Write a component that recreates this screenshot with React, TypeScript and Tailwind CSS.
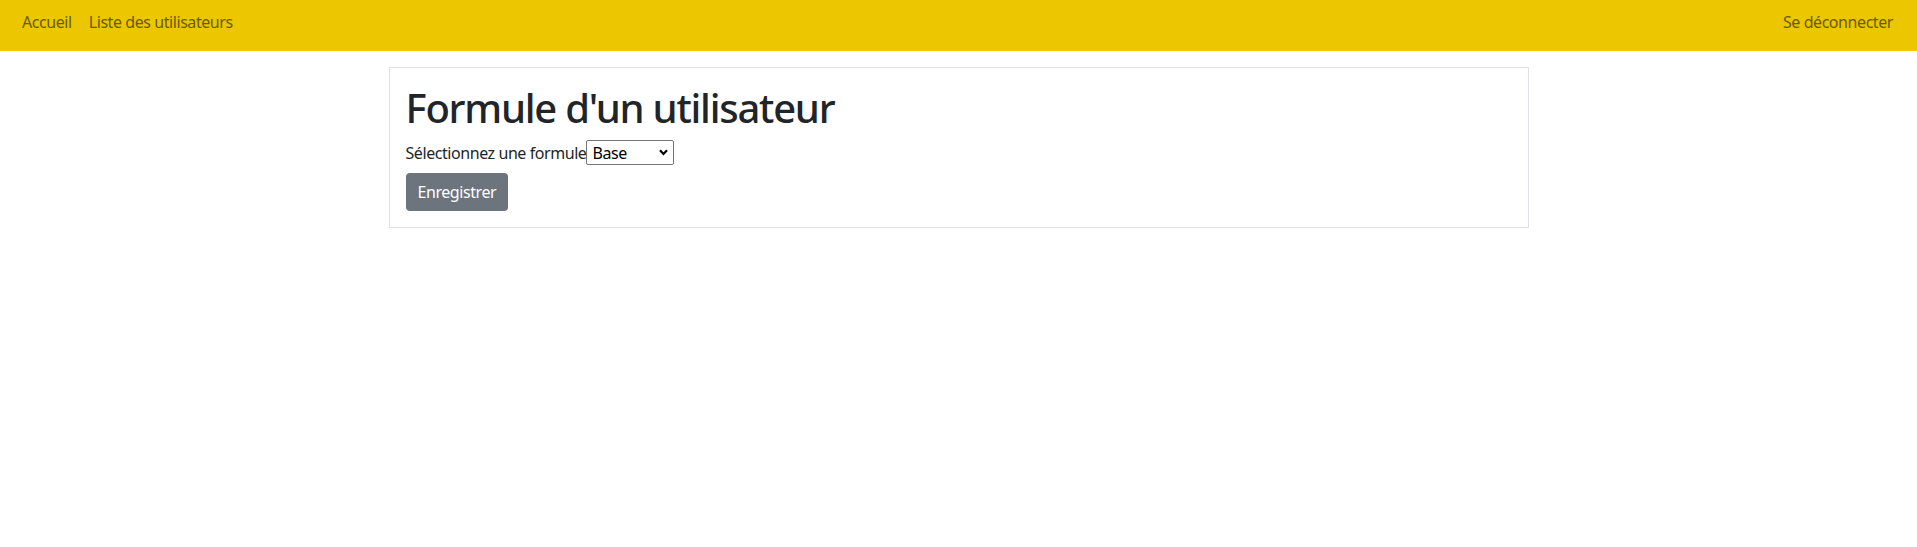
import React from "react";

export default function App() {
  return (
    <div className="min-h-screen bg-white tracking-[-0.027em] text-[#212529]" style={{ fontFamily: '"Noto Sans", "Open Sans", sans-serif' }}>
      <nav className="flex h-[51px] items-start justify-between bg-[#ecc700] pl-[22px] pr-[24px] pt-[10px] text-[16px] leading-[24px] text-[#6a5a00]">
        <div className="flex gap-[17px]">
          <a href="#">Accueil</a>
          <a href="#">Liste des utilisateurs</a>
        </div>
        <a href="#">Se déconnecter</a>
      </nav>
      <div className="mx-auto mt-4 w-[1140px] border border-[#dee2e6] p-4">
        <h1 className="mb-2 text-[40px] font-medium leading-[48px] tracking-[-0.031em]">Formule d'un utilisateur</h1>
        <form>
          <div className="flex items-center text-[16px] leading-[24px]">
            <label htmlFor="formule">Sélectionnez une formule</label>
            <div className="relative flex">
              <select
                id="formule"
                className="h-[25px] w-[88px] appearance-none rounded-[2px] border border-[#767676] bg-white pl-[5px] text-[16px] leading-[20px] text-black"
                defaultValue="Base"
              >
                <option>Base</option>
                <option>Premium</option>
              </select>
              <svg className="pointer-events-none absolute right-[6px] top-[9px]" width="9" height="7" viewBox="0 0 9 7">
                <path d="M1 1.2 L4.5 5 L8 1.2" fill="none" stroke="black" strokeWidth="2.2" />
              </svg>
            </div>
          </div>
          <button type="button" className="mt-[8px] h-[38px] rounded-[4px] bg-[#6c757d] px-3 text-[16px] leading-[24px] text-white">
            Enregistrer
          </button>
        </form>
      </div>
    </div>
  );
}
